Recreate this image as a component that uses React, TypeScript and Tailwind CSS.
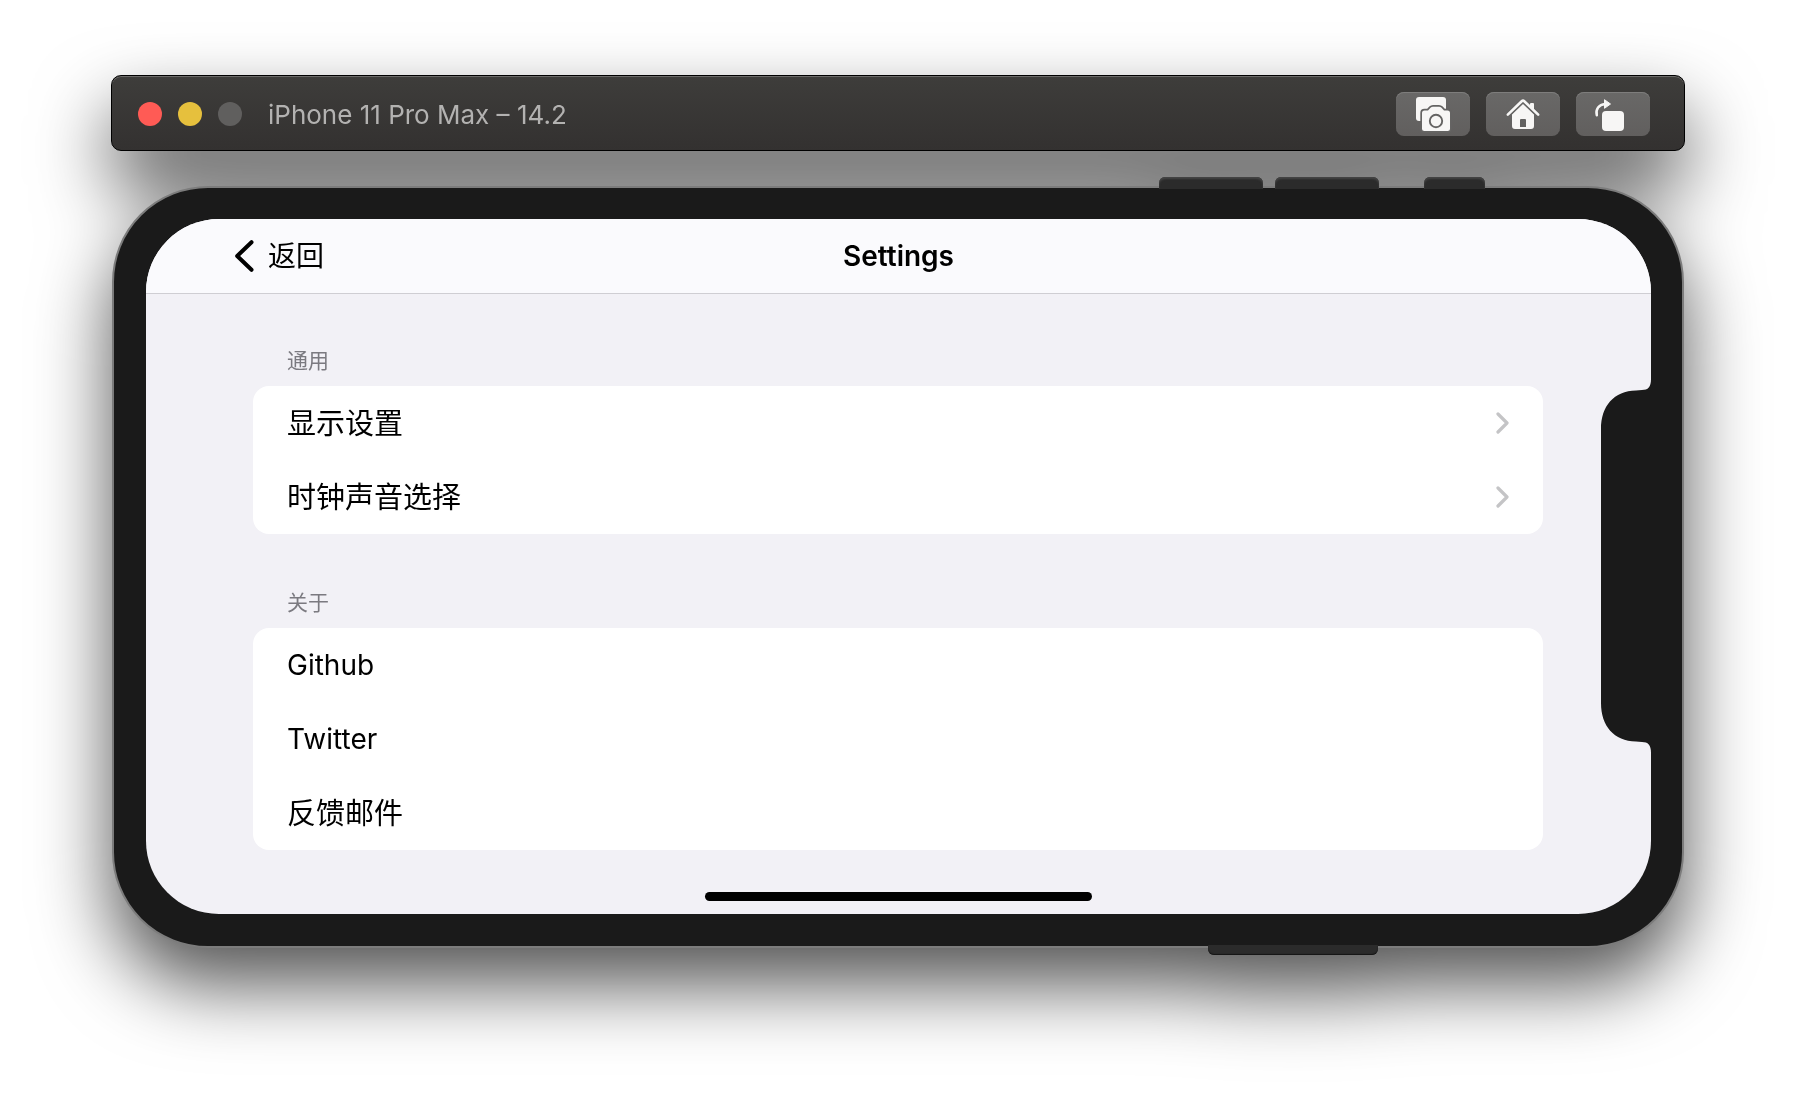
import React from "react";

type Row = { label: string; href?: string; latin?: boolean };

function CameraIcon() {
  return (
    <svg width="74" height="44" viewBox="0 0 74 44" aria-hidden="true">
      <rect x="20" y="5" width="30" height="24" rx="3" fill="#f7f6f5" />
      <path
        d="M28.500 18.500H32L34.500 15.800Q35.500 14.800 37 14.800H43Q44.500 14.800 45.500 15.800L48 18.500H51.500Q54 18.500 54 21V36.500Q54 39 51.500 39H28.500Q26 39 26 36.500V21Q26 18.500 28.500 18.500Z"
        fill="#f7f6f5"
        stroke="#656463"
        strokeWidth="3.400"
        paintOrder="stroke"
      />
      <circle cx="40" cy="29" r="6.200" fill="#f7f6f5" stroke="#656463" strokeWidth="1.900" />
    </svg>
  );
}

function HomeIcon() {
  return (
    <svg width="74" height="44" viewBox="0 0 74 44" aria-hidden="true">
      <path
        fillRule="evenodd"
        d="M26 22.500L37 12L48 22.500V34Q48 37 45 37H29Q26 37 26 34ZM35 27Q34 27 34 28V35H40V28Q40 27 39 27Z"
        fill="#f7f6f5"
      />
      <path
        d="M21.800 22.600L35.700 9.200Q37 8 38.300 9.200L52.200 22.600"
        fill="none"
        stroke="#656463"
        strokeWidth="5"
      />
      <path d="M44 15V12Q44 11 45 11H47Q48 11 48 12V19Z" fill="#f7f6f5" />
      <path
        d="M21.800 22.600L35.700 9.200Q37 8 38.300 9.200L52.200 22.600"
        fill="none"
        stroke="#f7f6f5"
        strokeWidth="2.600"
        strokeLinecap="round"
      />
    </svg>
  );
}

function RotateIcon() {
  return (
    <svg width="74" height="44" viewBox="0 0 74 44" aria-hidden="true">
      <rect x="26" y="19" width="22" height="20" rx="4" fill="#f7f6f5" />
      <path
        d="M20.800 23.200C19.300 17 23 12.500 29 12"
        fill="none"
        stroke="#f7f6f5"
        strokeWidth="2.500"
        strokeLinecap="round"
      />
      <path d="M28.500 7.700L34.500 12L28.500 16.300Z" fill="#f7f6f5" stroke="#f7f6f5" strokeLinejoin="round" />
    </svg>
  );
}

function ToolButton({ label, children }: { label: string; children: React.ReactNode }) {
  return (
    <button
      type="button"
      aria-label={label}
      className="h-11 w-[74px] overflow-hidden rounded-lg bg-gradient-to-b from-[#696867] to-[#615f5e] shadow-[inset_0_1px_0_#7e7d7c]"
    >
      {children}
    </button>
  );
}

function TitleBar() {
  return (
    <header className="flex h-[76px] items-center rounded-[10px] border border-black bg-gradient-to-b from-[#3e3d3b] to-[#333130] pt-[2px] pr-[34px] pl-[26px] shadow-[inset_0_1px_0_#6c6b69]">
      <div className="flex gap-4">
        <button type="button" aria-label="Close" className="size-6 rounded-full bg-[#ff5b55]" />
        <button type="button" aria-label="Minimize" className="size-6 rounded-full bg-[#e6c03d]" />
        <button type="button" aria-label="Zoom" className="size-6 rounded-full bg-[#605f5e]" />
      </div>
      <h1 className="ml-[26px] pt-[2px] text-[26px] leading-8 whitespace-nowrap text-[#b3b2b1]">
        iPhone 11 Pro Max – 14.2
      </h1>
      <div className="ml-auto flex gap-4">
        <ToolButton label="Screenshot">
          <CameraIcon />
        </ToolButton>
        <ToolButton label="Home">
          <HomeIcon />
        </ToolButton>
        <ToolButton label="Rotate">
          <RotateIcon />
        </ToolButton>
      </div>
    </header>
  );
}

function Chevron() {
  return (
    <svg width="14" height="22" viewBox="0 0 14 22" fill="none" aria-hidden="true">
      <path d="M3 2L12 11L3 20" stroke="#c4c4c6" strokeWidth="3.200" strokeLinecap="round" strokeLinejoin="round" />
    </svg>
  );
}

function Section({ title, rows }: { title: string; rows: Row[] }) {
  const rowClass = "flex h-[74px] w-full items-center justify-between px-[34px] text-left";
  return (
    <section>
      <h3 className="mb-[9px] pl-[34px] text-[21px] leading-8 text-[#7b7a80]">{title}</h3>
      <ul className="overflow-hidden rounded-2xl bg-white">
        {rows.map((row) => (
          <li key={row.label}>
            {row.href ? (
              <a href={row.href} className={rowClass}>
                <span className={row.latin ? "text-[28px]" : "pt-[2px] text-[29px]"}>{row.label}</span>
              </a>
            ) : (
              <button type="button" className={rowClass}>
                <span className="pt-[2px] text-[29px]">{row.label}</span>
                <Chevron />
              </button>
            )}
          </li>
        ))}
      </ul>
    </section>
  );
}

function SideButton({ className }: { className: string }) {
  return <span className={"absolute bg-[#2b2b2b] " + className} />;
}

function Phone() {
  return (
    <main className="relative mx-px mt-[35px] rounded-[96px] border-2 border-[#7c7c7c] bg-[#1a1a1a] pt-[31px] pr-[31px] pb-8 pl-8">
      <SideButton className="-top-[11px] right-[419px] h-3 w-[104px] rounded-t-md shadow-[inset_0_2px_2px_#454545]" />
      <SideButton className="-top-[11px] right-[303px] h-3 w-[104px] rounded-t-md shadow-[inset_0_2px_2px_#454545]" />
      <SideButton className="-top-[11px] right-[197px] h-3 w-[61px] rounded-t-md shadow-[inset_0_2px_2px_#454545]" />
      <SideButton className="-bottom-[9px] right-[304px] h-[10px] w-[170px] rounded-b-md shadow-[inset_0_-1px_1px_#151515]" />

      <div className="relative overflow-hidden rounded-[73px] bg-[#f2f1f6] text-black">
        <nav className="grid h-[75px] grid-cols-3 items-center border-b border-[#cfced3] bg-[#fafafd]">
          <button type="button" className="ml-[88px] flex items-center gap-[14px] justify-self-start text-[28px]">
            <svg width="20" height="32" viewBox="0 0 20 32" fill="none" aria-hidden="true">
              <path
                d="M17.500 2.200L3.200 16L17.500 29.800"
                stroke="#000"
                strokeWidth="4"
                strokeLinecap="round"
                strokeLinejoin="round"
              />
            </svg>
            返回
          </button>
          <h2 className="text-center text-[28px] font-semibold">Settings</h2>
        </nav>
        <div className="flex flex-col gap-[53px] pt-[51px] pr-[108px] pb-[42px] pl-[107px]">
          <Section title="通用" rows={[{ label: "显示设置" }, { label: "时钟声音选择" }]} />
          <Section
            title="关于"
            rows={[
              { label: "Github", href: "#github", latin: true },
              { label: "Twitter", href: "#twitter", latin: true },
              { label: "反馈邮件", href: "#feedback" },
            ]}
          />
        </div>
        <div className="mx-auto mb-[13px] h-[9px] w-[387px] rounded-full bg-black" />
        <svg
          className="absolute top-[160px] right-0"
          width="51"
          height="374"
          viewBox="0 0 51 374"
          aria-hidden="true"
        >
          <path
            d="M51 0C51 8 48 11 42 11L36 11.500C14 12 1 27 1 50V324C1 347 14 362 36 362.500L42 363C48 363 51 366 51 374Z"
            fill="#1a1a1a"
          />
        </svg>
      </div>
    </main>
  );
}

export default function App() {
  return (
    <div className="min-h-screen bg-white px-[111px] pt-[75px] pb-[60px] font-['Inter','Noto_Sans_CJK_SC',sans-serif]">
      <div className="drop-shadow-[0_37px_38px_rgba(0,0,0,0.67)]">
        <TitleBar />
        <Phone />
      </div>
    </div>
  );
}
